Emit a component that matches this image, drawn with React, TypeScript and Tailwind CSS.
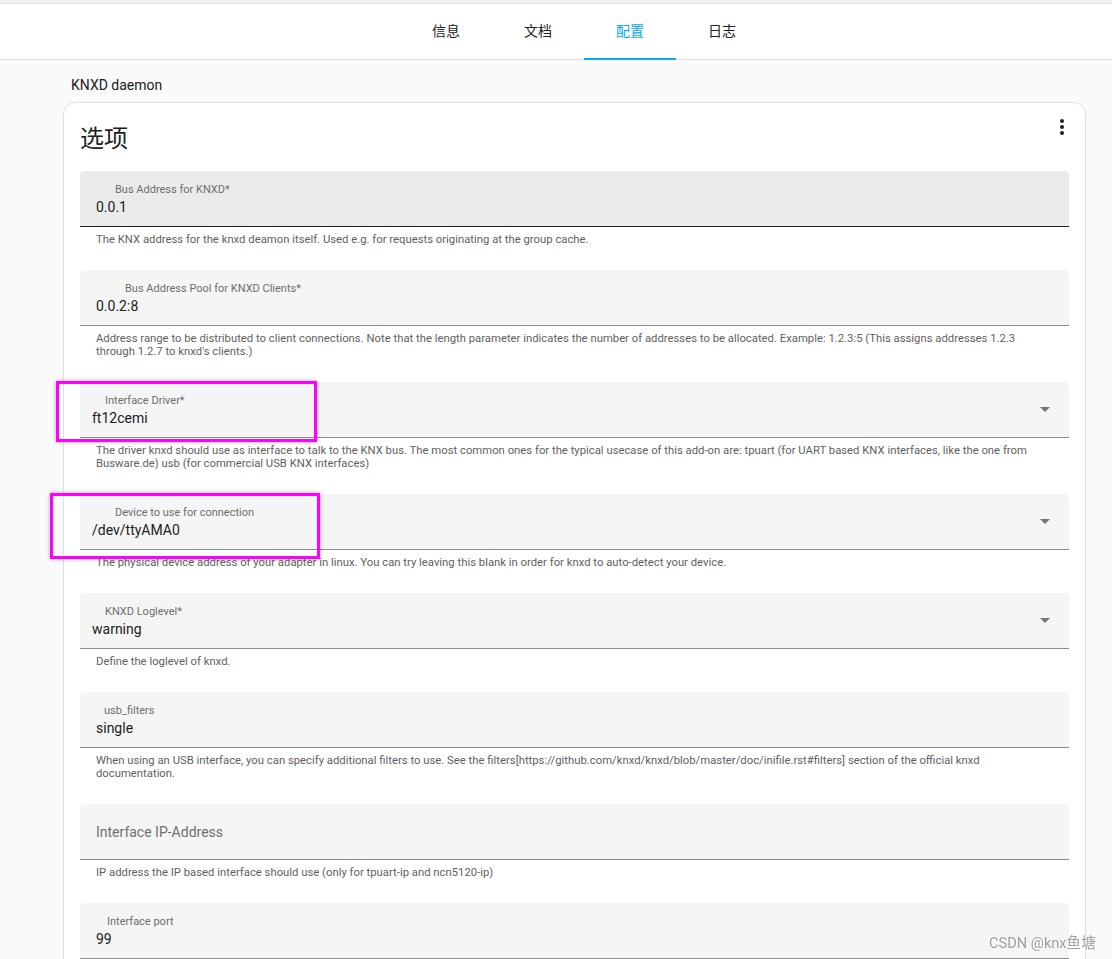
import React from "react";

interface FieldIF {
  label?: string;
  value?: string;
  placeholder?: string;
  helper: string[];
  labelPad: string; // odd floating-label offsets seen in the screenshot
  valuePad: string;
  select?: boolean;
  hovered?: boolean;
  mark?: "driver" | "device";
}

const fields: FieldIF[] = [
  {
    label: "Bus Address for KNXD*",
    value: "0.0.1",
    helper: ["The KNX address for the knxd deamon itself. Used e.g. for requests originating at the group cache."],
    labelPad: "pl-[35px]",
    valuePad: "pl-[16px]",
    hovered: true,
  },
  {
    label: "Bus Address Pool for KNXD Clients*",
    value: "0.0.2:8",
    helper: [
      "Address range to be distributed to client connections. Note that the length parameter indicates the number of addresses to be allocated. Example: 1.2.3:5 (This assigns addresses 1.2.3",
      "through 1.2.7 to knxd's clients.)",
    ],
    labelPad: "pl-[45px]",
    valuePad: "pl-[16px]",
  },
  {
    label: "Interface Driver*",
    value: "ft12cemi",
    helper: [
      "The driver knxd should use as interface to talk to the KNX bus. The most common ones for the typical usecase of this add-on are: tpuart (for UART based KNX interfaces, like the one from",
      "Busware.de) usb (for commercial USB KNX interfaces)",
    ],
    labelPad: "pl-[25px]",
    valuePad: "pl-[12px]",
    select: true,
    mark: "driver",
  },
  {
    label: "Device to use for connection",
    value: "/dev/ttyAMA0",
    helper: ["The physical device address of your adapter in linux. You can try leaving this blank in order for knxd to auto-detect your device."],
    labelPad: "pl-[35px]",
    valuePad: "pl-[12px]",
    select: true,
    mark: "device",
  },
  {
    label: "KNXD Loglevel*",
    value: "warning",
    helper: ["Define the loglevel of knxd."],
    labelPad: "pl-[25px]",
    valuePad: "pl-[12px]",
    select: true,
  },
  {
    label: "usb_filters",
    value: "single",
    helper: [
      "When using an USB interface, you can specify additional filters to use. See the filters[https://github.com/knxd/knxd/blob/master/doc/inifile.rst#filters] section of the official knxd",
      "documentation.",
    ],
    labelPad: "pl-[24px]",
    valuePad: "pl-[16px]",
  },
  {
    placeholder: "Interface IP-Address",
    helper: ["IP address the IP based interface should use (only for tpuart-ip and ncn5120-ip)"],
    labelPad: "pl-[16px]",
    valuePad: "pl-[16px]",
  },
  {
    label: "Interface port",
    value: "99",
    helper: [],
    labelPad: "pl-[27px]",
    valuePad: "pl-[16px]",
  },
];

const tabs = ["信息", "文档", "配置", "日志"];

const Field = ({ f }: { f: FieldIF }) => {
  return (
    <div>
      <div
        className={`relative flex h-[56px] rounded-t-[4px] border-b ${
          f.hovered ? "bg-[#ebebeb] border-[#212121]" : "bg-[#f5f5f5] border-[#8c8c8c]"
        }`}
      >
        {f.placeholder ? (
          <div className={`flex-1 self-center ${f.valuePad} text-[14px] text-[#6f6f6f] leading-[20px]`}>
            {f.placeholder}
          </div>
        ) : (
          <div className="flex-1 flex flex-col pt-[12px]">
            <div className={`${f.labelPad} text-[11px] leading-[14px] text-[#6e6e6e]`}>{f.label}</div>
            <div className={`${f.valuePad} text-[14px] leading-[20px] text-[#212121]`}>{f.value}</div>
          </div>
        )}
        {f.select && (
          <svg width="10" height="5" viewBox="0 0 10 5" className="self-center mr-[19px] fill-[#757575]">
            <path d="M0 0 L10 0 L5 5 Z" />
          </svg>
        )}
        {f.mark === "driver" && (
          <div className="absolute -left-[24px] -top-[1px] w-[261px] h-[61px] border-[3px] border-[#ff00ff] shadow-[0_0_4px_rgba(0,0,0,0.35)]" />
        )}
        {f.mark === "device" && (
          <div className="absolute -left-[30px] -top-[1px] w-[270px] h-[66px] border-[3px] border-[#ff00ff] shadow-[0_0_4px_rgba(0,0,0,0.35)]" />
        )}
      </div>
      <div className="pl-[16px] pr-[40px] pt-[6px] pb-[24px] text-[11.3px] leading-[13px] text-[#5f5f5f]">
        {f.helper.map((line, i) => (
          <div key={i} className="whitespace-nowrap">
            {line}
          </div>
        ))}
      </div>
    </div>
  );
};

export default function App() {
  return (
    <div
      className="min-h-screen bg-[#fafafa] overflow-hidden"
      style={{ fontFamily: 'Roboto, "Noto Sans CJK SC", sans-serif' }}
    >
      <div className="h-[4px] bg-[#f0f0f0] border-b border-[#e3e3e3]" />
      <div className="h-[56px] bg-white border-b border-[#e0e0e0] flex pl-[400px]">
        {tabs.map((t, i) => (
          <div
            key={t}
            className={`relative w-[92px] flex items-center justify-center text-[14px] ${
              i === 2 ? "text-[#03a9f4]" : "text-[#212121]"
            }`}
          >
            {t}
            {i === 2 && <span className="absolute left-0 right-0 -bottom-[1px] h-[2px] bg-[#03a9f4]" />}
          </div>
        ))}
      </div>

      <div className="pl-[63px] pr-[26px]">
        <div className="pl-[8px] pt-[15px] pb-[7px] text-[14px] leading-[20px] text-[#212121]">KNXD daemon</div>
        <div className="bg-white border border-[#e0e0e0] rounded-[12px] px-[16px] pt-[20px] pb-[40px]">
          <div className="flex justify-between items-start">
            <h1 className="text-[24px] leading-[32px] text-[#212121]">选项</h1>
            <div className="flex flex-col gap-[2px] mr-[5px] -mt-[4px]">
              <span className="w-[4px] h-[4px] rounded-full bg-[#212121]" />
              <span className="w-[4px] h-[4px] rounded-full bg-[#212121]" />
              <span className="w-[4px] h-[4px] rounded-full bg-[#212121]" />
            </div>
          </div>
          <div className="mt-[16px]">
            {fields.map((f, i) => (
              <Field key={i} f={f} />
            ))}
          </div>
        </div>
      </div>

      <div
        className="fixed left-[989px] top-[933px] text-[14.6px] leading-[20px] text-[#a0a0a0]"
        style={{ textShadow: "0 0 2px #fff" }}
      >
        CSDN @knx鱼塘
      </div>
    </div>
  );
}
